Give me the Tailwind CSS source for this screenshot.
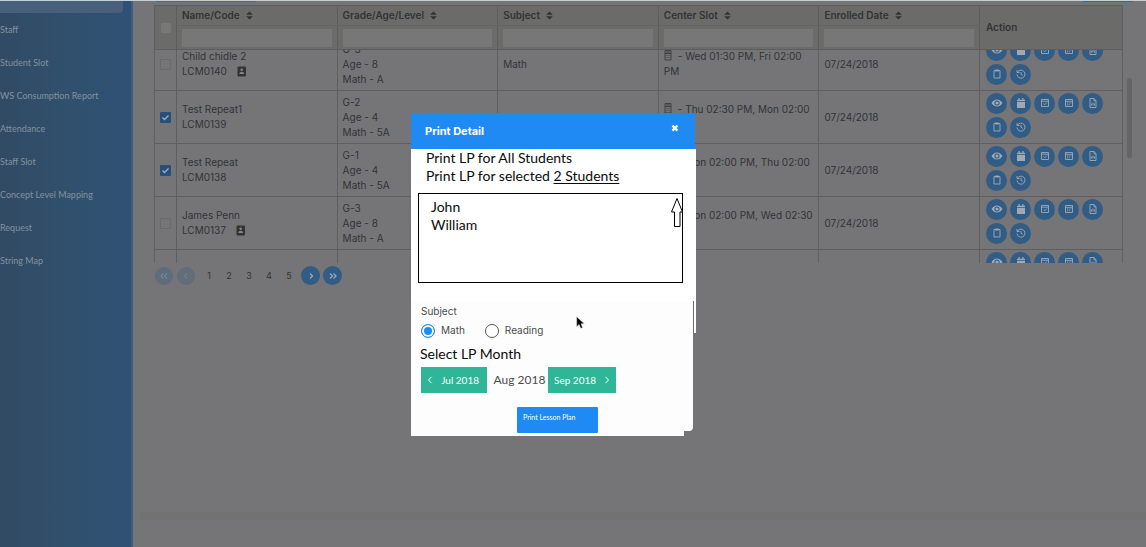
<!DOCTYPE html>
<html lang="en">
<head>
<meta charset="utf-8">
<title>Students</title>
<script src="https://cdn.jsdelivr.net/npm/@tailwindcss/browser@4"></script>
</head>
<body class="bg-[#757577] text-[#333336] font-['Inter',sans-serif] text-[10px] leading-[15px] overflow-hidden">
<svg class="hidden" aria-hidden="true">
  <symbol id="sort" viewBox="0 0 8 10"><path fill="currentColor" d="M4 .3 7.800 4.200H.2zM4 9.700.2 5.800h7.600z"/></symbol>
  <symbol id="badge" viewBox="0 0 10 11"><rect x=".5" y=".5" width="8.500" height="10" rx="1" fill="currentColor"/><circle cx="4.700" cy="3.800" r="1.300" fill="#858587"/><path d="M2.300 8c0-3 4.800-3 4.800 0z" fill="#858587"/></symbol>
  <symbol id="center" viewBox="0 0 8 11"><path fill="none" stroke="currentColor" stroke-width=".8" d="M1 .5h6v9.500H1zM1 3.500h6M2.200 2h3.600M2.500 5.500h1M4.500 5.500h1M2.500 7.500h1M4.500 7.500h1"/></symbol>
  <symbol id="eye" viewBox="0 0 12 12"><path fill="currentColor" fill-rule="evenodd" d="M.5 6c2.800-4.800 8.200-4.800 11 0-2.800 4.800-8.200 4.800-11 0zM6 3.400a2.600 2.600 0 1 0 0 5.200 2.600 2.600 0 0 0 0-5.200z"/><circle cx="6" cy="6" r="1.600" fill="currentColor"/></symbol>
  <symbol id="cal" viewBox="0 0 12 12"><path fill="currentColor" d="M2 2.800h1.500V1h1.200v1.800h2.600V1h1.200v1.800H10v1.500H2zM2 4.900h8V11H2z"/></symbol>
  <symbol id="calcheck" viewBox="0 0 12 12"><path fill="none" stroke="currentColor" stroke-width=".9" d="M2.500 2.500h7v7h-7zM2.500 4.200h7M4.300 6.500l1.300 1.300 2.200-2.200"/></symbol>
  <symbol id="calgrid" viewBox="0 0 12 12"><path fill="none" stroke="currentColor" stroke-width=".9" d="M2.500 2.500h7v7h-7zM2.500 4.300h7M4 6h1M5.700 6h1M7.400 6h1M4 7.800h1M5.700 7.800h1"/></symbol>
  <symbol id="doc" viewBox="0 0 12 12"><path fill="none" stroke="currentColor" stroke-width=".9" d="M3 1.500h4L9 3.700v6.800H3zM7 1.500v2.300h2M4.500 8.500v-2M6 8.500V5.500M7.500 8.500v-2"/></symbol>
  <symbol id="clip" viewBox="0 0 12 12"><path fill="none" stroke="currentColor" stroke-width=".9" d="M3 2.500h6v7.500H3z"/><path fill="currentColor" d="M4.300 1.500h3.400v2H4.300z"/></symbol>
  <symbol id="hist" viewBox="0 0 12 12"><path fill="none" stroke="currentColor" stroke-width=".9" d="M2.500 4.200A4 4 0 1 1 2 6.500M2 2v2.500h2.500M6 4v2.300l1.700 1"/></symbol>
</svg>

<div class="flex h-screen">
  <aside class="w-[133px] shrink-0 bg-linear-to-r from-[#324a64] via-[#30506c] to-[#2f5175] border-r-2 border-[#3f5f82] overflow-hidden">
    <div class="h-[13px] w-[123px] bg-[#48607b] rounded-br-sm"></div>
    <nav class="font-['Lato',sans-serif] text-[9px] text-[#84919f]">
      <a href="#" class="flex h-[33px] items-center whitespace-nowrap">Staff</a>
      <a href="#" class="flex h-[33px] items-center whitespace-nowrap">Student Slot</a>
      <a href="#" class="flex h-[33px] items-center whitespace-nowrap">WS Consumption Report</a>
      <a href="#" class="flex h-[33px] items-center whitespace-nowrap">Attendance</a>
      <a href="#" class="flex h-[33px] items-center whitespace-nowrap">Staff Slot</a>
      <a href="#" class="flex h-[33px] items-center whitespace-nowrap">Concept Level Mapping</a>
      <a href="#" class="flex h-[33px] items-center whitespace-nowrap">Request</a>
      <a href="#" class="flex h-[33px] items-center whitespace-nowrap">String Map</a>
    </nav>
  </aside>

  <main class="flex min-w-0 flex-1 flex-col pt-[5px]">
    <div class="relative ml-[21px] mr-[23px]">
      <table class="w-full table-fixed border-collapse bg-[#6b6b6a] text-left">
        <colgroup><col class="w-[22px]"><col><col><col><col><col><col class="w-[143px]"></colgroup>
        <thead id="head"></thead>
      </table>
      <div class="h-[213px] overflow-hidden">
        <table class="-mt-[13px] w-full table-fixed border-collapse">
          <colgroup><col class="w-[22px]"><col><col><col><col><col><col class="w-[143px]"></colgroup>
          <tbody id="rows"></tbody>
        </table>
      </div>
      <div class="absolute -right-[9px] top-[73px] h-20 w-[5px] rounded-full bg-[#646466]"></div>
    </div>
    <nav class="ml-[22px] mt-[3px] flex items-center text-[9px]" aria-label="Pages">
      <button class="mr-1 flex size-[18px] items-center justify-center rounded-full bg-[#5d6d7b] text-[#71859a]" aria-label="First"><svg class="size-3" viewBox="0 0 12 12" fill="none" stroke="currentColor" stroke-width="1.300"><path d="M5.500 3.500 3 6l2.500 2.500M9 3.500 6.500 6 9 8.500"/></svg></button>
      <button class="mr-1 flex size-[18px] items-center justify-center rounded-full bg-[#626d77] text-[#6f7c88]" aria-label="Previous"><svg class="size-3" viewBox="0 0 12 12" fill="none" stroke="currentColor" stroke-width="1.300"><path d="M7 3.500 4.500 6 7 8.500"/></svg></button>
      <a href="#" class="w-5 text-center">1</a><a href="#" class="w-5 text-center">2</a><a href="#" class="w-5 text-center">3</a><a href="#" class="w-5 text-center">4</a><a href="#" class="w-5 text-center">5</a>
      <button class="ml-[2px] mr-[3px] flex size-[19px] items-center justify-center rounded-full bg-[#315c86] text-[#9aa7b5]" aria-label="Next"><svg class="size-3" viewBox="0 0 12 12" fill="none" stroke="currentColor" stroke-width="1.300"><path d="M5 3.500 7.500 6 5 8.500"/></svg></button>
      <button class="flex size-[19px] items-center justify-center rounded-full bg-[#315c86] text-[#9aa7b5]" aria-label="Last"><svg class="size-3" viewBox="0 0 12 12" fill="none" stroke="currentColor" stroke-width="1.300"><path d="M3 3.500 5.500 6 3 8.500M6.500 3.500 9 6 6.500 8.500"/></svg></button>
    </nav>
    <div class="mb-[27px] ml-[7px] mt-auto h-2 bg-[#727272]"></div>
  </main>
</div>

<div class="absolute inset-x-0 top-0 h-px bg-[#c3d0d4]"></div>
<div class="absolute left-[156px] top-px h-px w-[100px] bg-[#4b6a85]"></div>
<div class="absolute right-[13px] top-px h-px w-[50px] bg-[#3c6890]"></div>

<section role="dialog" aria-labelledby="dlg" class="absolute left-[411px] top-[113px] w-[285px]">
  <header class="mr-px flex h-9 items-center justify-between bg-[#1f8af3] pl-[14px] pr-4 text-white">
    <h2 id="dlg" class="text-[11px] leading-4 font-bold">Print Detail</h2>
    <button class="mb-1.5 size-2" aria-label="Close"><svg viewBox="0 0 8 8" class="size-2" stroke="currentColor" stroke-width="2.200"><path d="m1.400 1.600 5 5M6.400 1.600l-5 5"/></svg></button>
  </header>
  <div class="h-[152px] bg-white pl-[7px] pr-[13px] font-['Lato',sans-serif] text-sm leading-[18px] text-[#0b0b0b]">
    <p class="pl-2">Print LP for All Students</p>
    <p class="pl-2">Print LP for selected <a href="#" class="underline underline-offset-2">2 Students</a></p>
    <div class="relative mt-2 h-[90px] border border-black pl-3 pt-1">
      <p>John</p>
      <p>William</p>
      <svg class="absolute -right-px top-[3px] h-[31px] w-3" viewBox="0 0 12 31" fill="#fff" stroke="#000"><path d="M6 1.500 11.500 15H9v14.500H3.500V15H.5z"/></svg>
    </div>
  </div>
  <div class="relative mr-[3px] h-[130px] rounded-br bg-[#fdfdfd] pl-[9px] pt-[3px] text-[#4b4b4e]">
    <fieldset class="pl-px">
      <legend>Subject</legend>
      <div class="mt-1 flex gap-5">
        <label class="flex items-center gap-1.5"><input type="radio" name="subject" checked class="size-[14px] appearance-none rounded-full border border-[#1f8af3] bg-[#1f8af3] shadow-[inset_0_0_0_2px_#fff]">Math</label>
        <label class="flex items-center gap-1.5"><input type="radio" name="subject" class="size-[14px] appearance-none rounded-full border border-[#555] bg-white">Reading</label>
      </div>
    </fieldset>
    <h3 class="mt-[7px] font-['Lato',sans-serif] text-sm leading-[18px] text-[#0b0b0b]">Select LP Month</h3>
    <div class="ml-px mt-1 flex items-center font-['Lato',sans-serif]">
      <button class="flex h-[26px] w-[66px] items-center justify-end gap-2 bg-[#2fb597] pr-2 text-white"><svg class="h-2 w-[6px]" viewBox="0 0 6 8" fill="none" stroke="currentColor"><path d="M4.500.8 1.500 4l3 3.200"/></svg>Jul 2018</button>
      <span class="w-[61px] pl-1 text-center text-xs">Aug 2018</span>
      <button class="flex h-[26px] w-[68px] items-center gap-2 bg-[#2fb597] pl-1.5 text-white">Sep 2018<svg class="h-2 w-[6px]" viewBox="0 0 6 8" fill="none" stroke="currentColor"><path d="m1.500.8 3 3.200-3 3.200"/></svg></button>
    </div>
    <div class="absolute -right-[3px] top-0 h-8 w-[2px] bg-white"></div>
    <div class="absolute -right-px top-0 h-8 w-px bg-[#6d6d70]"></div>
    <svg class="absolute left-[165px] top-[15px] h-[13px] w-[9px]" viewBox="0 0 9 13"><path d="M.7.7v10l2.400-2.300 1.700 3.900 1.800-.8L5 7.800h3.300z" fill="#000" stroke="#ddd" stroke-width=".5"/></svg>
  </div>
  <div class="h-[5px] w-[273px] bg-[#fdfdfd]"></div>
  <button class="absolute left-[106px] top-[294px] flex h-[26px] w-[81px] rounded-[1px] bg-[#1f8af3] pl-1.5 pt-1 text-left font-['Lato',sans-serif] text-[7px] leading-3 text-white">Print Lesson Plan</button>
</section>

<script>
const use = (id, cls) => `<svg class="${cls}"><use href="#${id}"/></svg>`;
const cols = ['Name/Code', 'Grade/Age/Level', 'Subject', 'Center Slot', 'Enrolled Date'];
document.getElementById('head').innerHTML =
  `<tr class="h-5"><th rowspan="2" class="border border-[#5d5d5d] p-0 text-center"><input type="checkbox" aria-label="Select all" class="mt-1 size-[10px] appearance-none rounded-[1px] bg-[#787879]"></th>` +
  cols.map(c => `<th class="border border-[#5d5d5d] border-b-[#646464] p-0 pl-[5px] font-semibold"><span class="flex items-center gap-1.5">${c}${use('sort', 'h-[9px] w-[7px]')}</span></th>`).join('') +
  `<th rowspan="2" class="border border-[#5d5d5d] p-0 pl-1.5 font-semibold">Action</th></tr><tr class="h-6">` +
  cols.map(c => `<td class="border border-[#5d5d5d] px-[5px] py-0"><input type="text" aria-label="Filter ${c}" class="block h-[18px] w-full bg-[#777778]"></td>`).join('') + `</tr>`;

const data = [
  [0, 'Child chidle 2', 'LCM0140', 1, 'G-3', 'Age - 8', 'Math - A', 'Math', 'Wed 01:30 PM, Fri 02:00 PM'],
  [1, 'Test Repeat1', 'LCM0139', 0, 'G-2', 'Age - 4', 'Math - 5A', '', 'Thu 02:30 PM, Mon 02:00 PM'],
  [1, 'Test Repeat', 'LCM0138', 0, 'G-1', 'Age - 4', 'Math - 5A', '', 'Mon 02:00 PM, Thu 02:00 PM'],
  [0, 'James Penn', 'LCM0137', 1, 'G-3', 'Age - 8', 'Math - A', '', 'Mon 02:00 PM, Wed 02:30 PM'],
  null
];
const icons = [['eye', 'View'], ['cal', 'Calendar'], ['calcheck', 'Attendance'], ['calgrid', 'Schedule'], ['doc', 'Report'], ['clip', 'Plan'], ['hist', 'History']];
const actions = icons.map(([i, l]) => `<button aria-label="${l}" class="flex size-[21px] items-center justify-center rounded-full bg-[#315c86] text-[#a0a9b3]">${use(i, 'size-3')}</button>`).join('');
const td = (html, cls) => `<td class="${cls || 'border border-[#5f5f61] py-0 pl-[5px] pr-1'}">${html}</td>`;
const act = `<div class="flex flex-wrap gap-[3px] pb-1 pl-px">${actions}</div>`;
document.getElementById('rows').innerHTML = data.map(r => {
  if (!r) return `<tr class="h-[53px]">` + td('') + td('') + td('') + td('') + td('') + td('') + td(act) + `</tr>`;
  const box = r[0]
    ? `<span class="relative mx-auto block size-[11px]"><input type="checkbox" checked aria-label="Select ${r[1]}" class="block size-[11px] appearance-none rounded-[1px] bg-[#264f7c]"><svg class="pointer-events-none absolute inset-0 size-[11px]" viewBox="0 0 11 11" fill="none" stroke="#a3adb8" stroke-width="1.300"><path d="m2.500 5.500 2 2 4-4"/></svg></span>`
    : `<input type="checkbox" aria-label="Select ${r[1]}" class="mx-auto block size-[11px] appearance-none rounded-[1px] border border-[#6a6a6d]">`;
  return `<tr class="h-[53px]">` + td(box, 'border border-[#5f5f61] p-0') +
    td(`${r[1]}<br><span class="flex items-center gap-[10px]">${r[2]}${r[3] ? use('badge', 'h-[11px] w-[10px]') : ''}</span>`) +
    td(`${r[4]}<br>${r[5]}<br>${r[6]}`) + td(r[7]) +
    td(`${use('center', 'mr-1.5 inline-block h-[11px] w-2 align-[-1px]')}- ${r[8]}`, 'border border-[#5f5f61] py-0 pl-[5px] pr-0') + td('07/24/2018') + td(act) + `</tr>`;
}).join('');
</script>
</body>
</html>
